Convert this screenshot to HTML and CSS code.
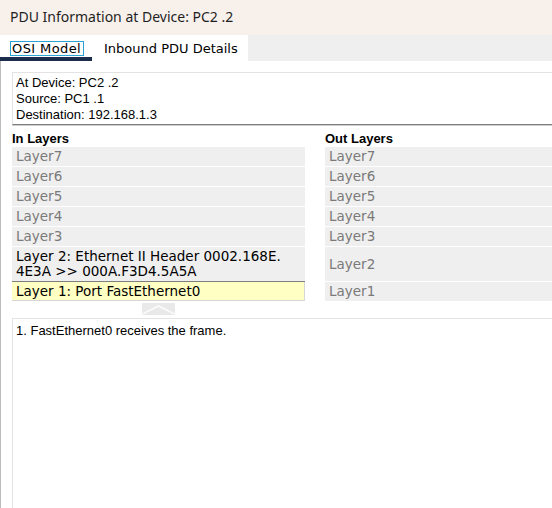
FILE: index.html
```html
<!DOCTYPE html>
<html>
<head>
<meta charset="utf-8">
<link rel="stylesheet" href="styles.css">
</head>
<body>
<div class="window">
  <div class="titlebar">PDU Information at Device: PC2 .2</div>
  <div class="tabbar">
    <div class="tab active"><span class="focus">OSI Model</span></div>
    <div class="tab">Inbound PDU Details</div>
    <div class="tabfill"></div>
  </div>
  <div class="content">
    <div class="info">
      <div>At Device: PC2 .2</div>
      <div>Source: PC1 .1</div>
      <div>Destination: 192.168.1.3</div>
    </div>
    <div class="layers">
      <div class="head">In Layers</div>
      <div class="head">Out Layers</div>
      <div class="cell dim">Layer7</div>
      <div class="cell dim">Layer7</div>
      <div class="cell dim">Layer6</div>
      <div class="cell dim">Layer6</div>
      <div class="cell dim">Layer5</div>
      <div class="cell dim">Layer5</div>
      <div class="cell dim">Layer4</div>
      <div class="cell dim">Layer4</div>
      <div class="cell dim">Layer3</div>
      <div class="cell dim">Layer3</div>
      <div class="cell">Layer 2: Ethernet II Header 0002.168E.<wbr>4E3A &gt;&gt; 000A.F3D4.5A5A</div>
      <div class="cell dim mid">Layer2</div>
      <div class="cell sel">Layer 1: Port FastEthernet0</div>
      <div class="cell dim">Layer1</div>
    </div>
    <div class="splitter">
      <svg width="33" height="12" viewBox="0 0 33 12"><rect x="0" y="0" width="33" height="12" fill="#e9e9e9"/><polyline points="0.5,11 16.5,3 32.5,11" fill="none" stroke="#fbfbfb" stroke-width="1.6"/></svg>
    </div>
    <div class="desc">1. FastEthernet0 receives the frame.</div>
  </div>
</div>
</body>
</html>
```
FILE: styles.css
```css
html, body {
  margin: 0;
  padding: 0;
  background: #ffffff;
}
.window {
  width: 552px;
  height: 508px;
  display: flex;
  flex-direction: column;
  overflow: hidden;
}
.titlebar {
  height: 35px;
  box-sizing: border-box;
  padding: 7px 0 0 10px;
  background: #f8f0eb;
  color: #1f1f1f;
  font-family: "Noto Sans", "Open Sans", sans-serif;
  font-size: 14px;
  line-height: 20px;
}
.tabbar {
  height: 26px;
  display: flex;
  font-family: "DejaVu Sans", Verdana, sans-serif;
  font-size: 13px;
  color: #000;
}
.tab {
  box-sizing: border-box;
  height: 26px;
  padding: 7px 0 0 12px;
  line-height: 14px;
  background: #fff;
}
.tab.active {
  width: 92px;
  padding-left: 11px;
  border-bottom: 4px solid #1b2d4b;
}
.tab .focus {
  display: inline-block;
  outline: 1px solid #2aa2d6;
  padding: 0 2px 0 1px;
  line-height: 13px;
  letter-spacing: 0.4px;
}
.tab:nth-child(2) {
  width: 156px;
}
.tabfill {
  flex: 1;
  background: #efefef;
}
.content {
  flex: 1;
  display: flex;
  flex-direction: column;
  border-left: 1px solid #bcbcbc;
  padding-left: 11px;
  min-height: 0;
}
.info {
  margin-top: 11px;
  border-top: 1px solid #e3e3e3;
  border-left: 1px solid #e3e3e3;
  border-bottom: 1px solid #7d7d7d;
  box-shadow: 0 1px 0 #cfcfcf;
  padding: 2px 0 1px 3px;
  font-family: "Liberation Sans", Arial, sans-serif;
  font-size: 13px;
  line-height: 16px;
  color: #000;
}
.layers {
  margin-top: 6px;
  display: grid;
  grid-template-columns: 293px 1fr;
  column-gap: 20px;
  row-gap: 1px;
  font-family: "DejaVu Sans", Verdana, sans-serif;
  font-size: 13.5px;
}
.head {
  font-family: "Liberation Sans", Arial, sans-serif;
  font-weight: bold;
  font-size: 13px;
  line-height: 15px;
  color: #000;
}
.cell {
  background: #efefef;
  padding: 2px 4px;
  line-height: 15px;
  color: #000;
}
.cell.dim {
  color: #7a7a7a;
}
.cell.mid {
  display: flex;
  align-items: center;
}
.cell.sel {
  background: #ffffc4;
  box-shadow: 0 -1px 0 #7f7f7f, inset -1px -1px 0 #d6d6d6;
}
.splitter {
  width: 293px;
  height: 17px;
  display: flex;
  justify-content: center;
  padding-top: 2px;
  box-sizing: border-box;
}
.splitter svg {
  display: block;
}
.desc {
  flex: 1;
  border-top: 1px solid #e3e3e3;
  border-left: 1px solid #e3e3e3;
  padding: 4px 0 0 3px;
  font-family: "Liberation Sans", Arial, sans-serif;
  font-size: 13px;
  line-height: 16px;
  color: #000;
}
```
